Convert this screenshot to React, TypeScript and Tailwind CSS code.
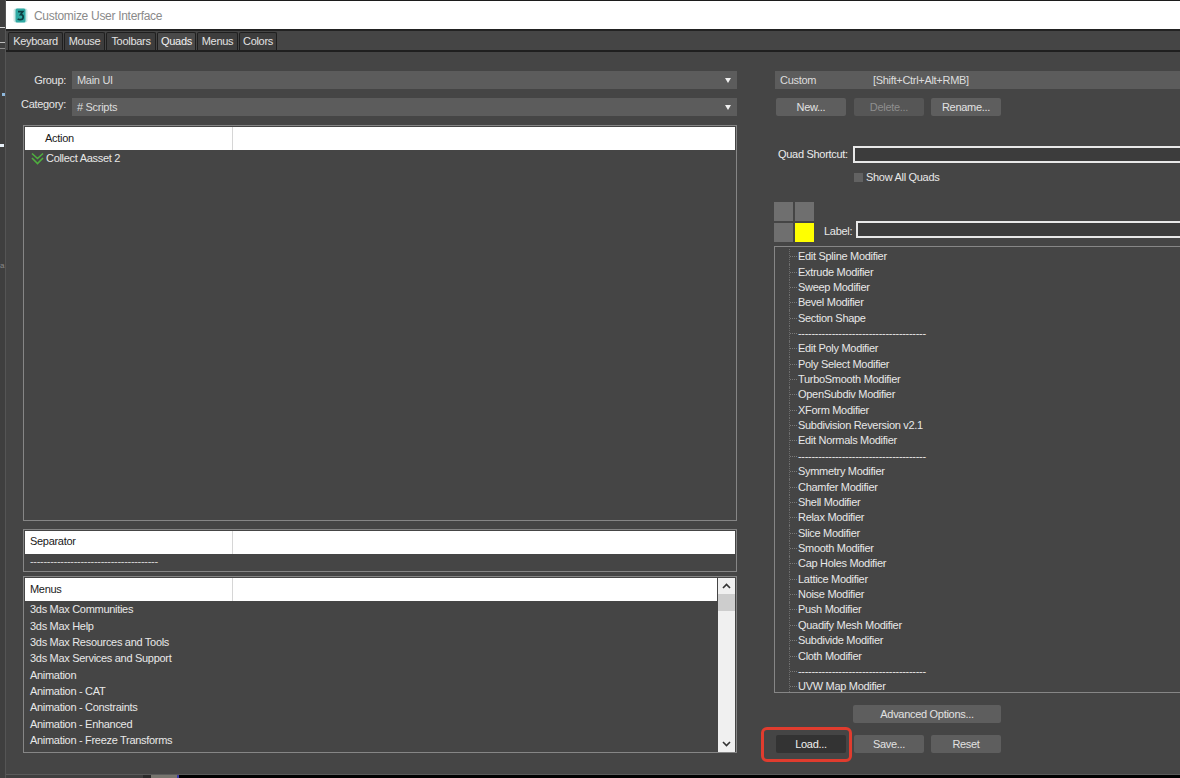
import React from "react";

const font = { fontFamily: '"Liberation Sans", Arial, sans-serif' };

const tabs = ["Keyboard", "Mouse", "Toolbars", "Quads", "Menus", "Colors"];
const tabWidths = [55, 41, 50, 39, 41, 38];

const sep = "--------------------------------------";
const tree = [
  "Edit Spline Modifier", "Extrude Modifier", "Sweep Modifier", "Bevel Modifier", "Section Shape", sep,
  "Edit Poly Modifier", "Poly Select Modifier", "TurboSmooth Modifier", "OpenSubdiv Modifier", "XForm Modifier",
  "Subdivision Reversion v2.1", "Edit Normals Modifier", sep,
  "Symmetry Modifier", "Chamfer Modifier", "Shell Modifier", "Relax Modifier", "Slice Modifier", "Smooth Modifier",
  "Cap Holes Modifier", "Lattice Modifier", "Noise Modifier", "Push Modifier", "Quadify Mesh Modifier",
  "Subdivide Modifier", "Cloth Modifier", sep, "UVW Map Modifier",
];
const menus = [
  "3ds Max Communities", "3ds Max Help", "3ds Max Resources and Tools", "3ds Max Services and Support", "Animation",
  "Animation - CAT", "Animation - Constraints", "Animation - Enhanced", "Animation - Freeze Transforms",
];

function Select({ text, extra, arrow = true }: { text: string; extra?: string; arrow?: boolean }) {
  return (
    <div className="h-[18px] flex-1 bg-[#5c5c5c] flex items-center pl-[5px] pt-px text-[#dcdcdc]">
      <span className="w-[93px] shrink-0">{text}</span>
      {extra && <span>{extra}</span>}
      {arrow && (
        <span className="ml-auto mr-[6px] mb-px w-0 h-0 border-l-[3.5px] border-r-[3.5px] border-t-[5px] border-l-transparent border-r-transparent border-t-[#f0f0f0]" />
      )}
    </div>
  );
}

function Btn({ children, w = "w-[70px]", muted, dark, cls = "" }: { children: React.ReactNode; w?: string; muted?: boolean; dark?: boolean; cls?: string }) {
  return (
    <div
      className={`${w} ${cls} h-[18px] rounded-[2px] flex items-center justify-center ${
        dark ? "bg-[#333333] text-[#f0f0f0]" : muted ? "bg-[#565656] text-[#8e8e8e]" : "bg-[#5e5e5e] text-[#e2e2e2]"
      }`}
    >
      {children}
    </div>
  );
}

function PanelHeader({ title, indent }: { title: string; indent: string }) {
  return (
    <div className="h-[23px] bg-white flex items-center text-[#1a1a1a] shrink-0 mx-px mt-px">
      <div className={`w-[208px] h-full border-r border-[#d6d6d6] flex items-center ${indent}`}>{title}</div>
    </div>
  );
}

export default function App() {
  return (
    <div
      style={font}
      className="relative w-[1180px] h-[778px] overflow-hidden bg-[#454545] text-[11px] tracking-[-0.3px] leading-none text-[#e8e8e8] flex"
    >
      {/* sliver of the application behind the dialog */}
      <div className="w-[6px] shrink-0 bg-[#3f3f3f] border-r border-[#555555] relative">
        <div className="absolute left-0 top-[27px] w-[5px] h-px bg-[#d8d8d8]" />
        <div className="absolute left-0 top-[42px] w-[5px] h-px bg-[#bdbdbd]" />
        <div className="absolute left-0 top-[48px] w-[5px] h-px bg-[#8c8c8c]" />
        <div className="absolute left-[2px] top-[93px] w-[3px] h-[3px] bg-[#8fb8dc]" />
        <div className="absolute left-0 top-[144px] w-[4px] h-[3px] bg-[#e8f0f8]" />
        <div className="absolute left-0 top-[262px] text-[8px] text-[#8a8a8a]">a</div>
      </div>

      <div className="flex-1 flex flex-col min-w-0">
        {/* title bar */}
        <div className="h-[31px] shrink-0 border-t border-[#1c1c1c] border-b-2 border-b-[#222222] bg-white flex items-center pl-[7px] gap-[6px]">
          <svg width="15" height="15" viewBox="0 0 15 15">
            <rect x="0.5" y="0.5" width="14" height="14" rx="2" fill="#cfe8e6" />
            <rect x="2.5" y="0.5" width="10" height="14" rx="1.5" fill="#2fa9a3" />
            <path d="M5 3.6 H9.8 L7.6 6.6 C9.4 6.6 10.2 7.8 10.2 8.9 C10.2 10.7 8.6 11.6 7.2 11.6 C6.2 11.6 5.3 11.3 4.7 10.8" fill="none" stroke="#0d3f42" strokeWidth="1.7" />
          </svg>
          <span className="text-[#8a8a8a] text-[12px] pt-px">Customize User Interface</span>
        </div>

        {/* tabs */}
        <div className="h-[21px] shrink-0 flex items-end pl-[2px] gap-px border-b-2 border-[#1f1f1f]">
          {tabs.map((t, i) => (
            <div
              key={t}
              style={{ width: tabWidths[i] }}
              className={`h-[18px] border-t border-l border-r border-[#1f1f1f] rounded-t-[2px] flex items-center justify-center ${
                t === "Quads" ? "bg-[#4a4a4a] text-[#f2f2f2]" : "bg-[#3d3d3d] text-[#e2e2e2]"
              }`}
            >
              {t}
            </div>
          ))}
        </div>

        {/* body */}
        <div className="flex-1 flex pl-[17px] pt-[19px] gap-[38px] min-h-0">
          {/* left column */}
          <div className="w-[714px] shrink-0 flex flex-col">
            <div className="flex h-[18px] -ml-[4px] mr-0">
              <div className="w-[53px] pr-[6px] text-right text-[#e4e4e4] leading-[18px]">Group:</div>
              <Select text="Main UI" />
            </div>
            <div className="flex h-[18px] -ml-[4px] mt-[9px]">
              <div className="w-[53px] pr-[6px] text-right text-[#e4e4e4] leading-[12px] whitespace-nowrap">Category:</div>
              <Select text="# Scripts" />
            </div>

            <div className="mt-[9px] h-[396px] border border-[#868686] flex flex-col">
              <PanelHeader title="Action" indent="pl-[20px] pb-px" />
              <div className="flex items-center h-[17px] pl-[7px] gap-[2px]">
                <svg width="13" height="13" viewBox="0 0 13 13" fill="none" stroke="#4faf3f" strokeWidth="1.6">
                  <path d="M1 1.5 L6.5 6.5 L12 1.5" />
                  <path d="M1 6 L6.5 11.5 L12 6" />
                </svg>
                <span>Collect Aasset 2</span>
              </div>
            </div>

            <div className="mt-[8px] h-[43px] border border-[#868686] flex flex-col">
              <PanelHeader title="Separator" indent="pl-[5px] pb-[2px]" />
              <div className="pl-[6px] mt-[2px] text-[#d8d8d8]">{sep}</div>
            </div>

            <div className="mt-[4px] h-[177px] border border-[#868686] flex overflow-hidden">
              <div className="flex-1 flex flex-col min-w-0">
                <PanelHeader title="Menus" indent="pl-[5px] pb-px" />
                <div className="pl-[6px] pt-[0.5px] flex-1 overflow-hidden">
                  {menus.map((m) => (
                    <div key={m} className="h-[16.35px] flex items-center">{m}</div>
                  ))}
                </div>
              </div>
              <div className="w-[17px] shrink-0 bg-[#f0f0f0] flex flex-col mt-px mr-px">
                <div className="h-[16px] flex items-center justify-center">
                  <svg width="9" height="6" viewBox="0 0 9 6" fill="none" stroke="#333" strokeWidth="1.6"><path d="M1 5 L4.5 1.5 L8 5" /></svg>
                </div>
                <div className="h-[17px] bg-[#cdcdcd]" />
                <div className="flex-1" />
                <div className="h-[16px] flex items-center justify-center">
                  <svg width="9" height="6" viewBox="0 0 9 6" fill="none" stroke="#333" strokeWidth="1.6"><path d="M1 1 L4.5 4.5 L8 1" /></svg>
                </div>
              </div>
            </div>
          </div>

          {/* right column */}
          <div className="w-[430px] shrink-0 flex flex-col">
            <div className="flex h-[18px]">
              <Select text="Custom" extra="[Shift+Ctrl+Alt+RMB]" arrow={false} />
            </div>
            <div className="flex mt-[9px] ml-px gap-[7px]">
              <Btn>New...</Btn>
              <Btn muted cls="ml-px">Delete...</Btn>
              <Btn>Rename...</Btn>
            </div>

            <div className="flex items-center mt-[30px] ml-[3px] h-[17px]">
              <div className="w-[75px] text-[#ececec] whitespace-nowrap">Quad Shortcut:</div>
              <div className="flex-1 h-[17px] border-2 border-[#e8e8e8] bg-[#3c3c3c]" />
            </div>
            <div className="flex items-center mt-[9px] ml-[79px] h-[10px] gap-[3px]">
              <div className="w-[9px] h-[9px] bg-[#626262]" />
              <span>Show All Quads</span>
            </div>

            <div className="flex items-end mt-[20px] -ml-px">
              <div className="grid grid-cols-[19px_19px] grid-rows-[19px_19px] gap-[2px]">
                <div className="bg-[#6f6f6f]" />
                <div className="bg-[#6f6f6f]" />
                <div className="bg-[#6f6f6f]" />
                <div className="bg-[#ffff00]" />
              </div>
              <div className="flex items-center mb-[4px] flex-1">
                <span className="ml-[10px] w-[32px] pt-[4px]">Label:</span>
                <div className="flex-1 h-[17px] border-2 border-[#e8e8e8] bg-[#3c3c3c]" />
              </div>
            </div>

            <div className="mt-[4px] -ml-px h-[447px] border border-[#868686] pt-[2px] overflow-hidden">
              {tree.map((t, i) => (
                <div key={i} className="h-[15.36px] flex items-center">
                  <div className="ml-[14px] w-[8px] h-full border-l border-dotted border-[#6e6e6e] flex items-center shrink-0">
                    <div className="w-full border-t border-dotted border-[#7a7a7a]" />
                  </div>
                  <span className="ml-px whitespace-nowrap">{t}</span>
                </div>
              ))}
            </div>

            <div className="mt-[12px] ml-[78px]">
              <Btn w="w-[148px]">Advanced Options...</Btn>
            </div>
            <div className="flex mt-[12px] ml-px gap-[7px]">
              <div className="relative">
                <Btn dark>Load...</Btn>
                <div className="absolute -left-[15px] -top-[8px] w-[91px] h-[35px] border-[3px] border-[#e03c2e] rounded-[6px]" />
              </div>
              <Btn cls="ml-px">Save...</Btn>
              <Btn>Reset</Btn>
            </div>
          </div>
        </div>

        {/* sliver of the viewport below the dialog */}
        <div className="h-[4px] shrink-0 flex border-t border-[#5a5a5a]">
          <div className="w-[137px] bg-[#3f3f3f]" />
          <div className="w-[8px] bg-[#2a2a2a]" />
          <div className="w-[26px] bg-[#77756e]" />
          <div className="w-[2px] bg-[#3a3aa0]" />
          <div className="flex-1 bg-black" />
        </div>
      </div>
    </div>
  );
}
